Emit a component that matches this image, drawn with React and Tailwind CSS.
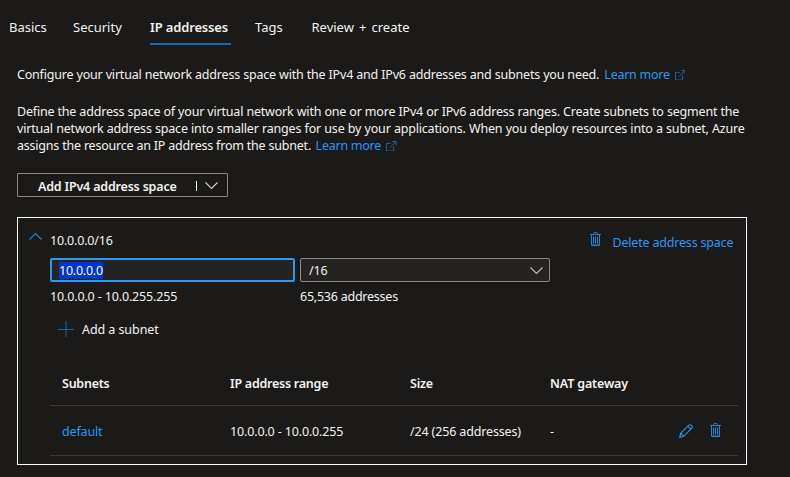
const ExternalIcon = () => (
  <svg className="ml-[5px] inline-block h-[10.500px] w-[10.500px] align-[-1px]" viewBox="0 0 11 11" fill="none" stroke="#2583cf" strokeWidth="0.75">
    <path d="M5 2.500H.5v8h7.500V6M6.500.5h4v4M10.500.5L4 7" />
  </svg>
);

const TrashIcon = () => (
  <svg className="h-[15px] w-[11px] shrink-0" viewBox="0 0 11 15" fill="none" stroke="#2384d5" strokeWidth="1">
    <path d="M0 2.500h11M3.500 2.500v-1q0-.9.9-.9h2.200q.9 0 .9.9v1M1.500 2.500v10.600q0 .5.5.5h7q.5 0 .5-.5V2.500" />
    <path d="M3.500 4.500v7M5.500 4.500v7M7.500 4.500v7M1.500 13h8" strokeWidth="1.1" />
  </svg>
);

const PencilIcon = () => (
  <svg className="h-[14px] w-[14px] shrink-0" viewBox="0 0 14 14" fill="none" stroke="#2b94e8" strokeWidth="1.1">
    <path d="M.7 13.300l.9-4L9.800 1.200q1.200-1 2.400 0l.6.6q1 1.200 0 2.400L4.700 12.300zM1.700 9.300l3 3M8.800 2.200l3 3" />
  </svg>
);

const Chevron = ({ color, up = false }) => (
  <svg className="h-[7px] w-[13px] shrink-0" viewBox="0 0 13 7" fill="none" stroke={color} strokeWidth="1.1">
    <path d={up ? "M.5 6.500L6.500.5l6 6" : "M.5.5l6 6 6-6"} />
  </svg>
);

export default function App() {
  return (
    <div className="h-[477px] w-[790px] overflow-hidden bg-[#1b1a19] font-['Noto_Sans','Open_Sans',sans-serif] text-[12.5px] leading-[17px] tracking-[-0.19px] whitespace-nowrap text-[#f3f2f1]">
      <nav className="flex h-[45px] pt-[19px] pl-[9px] text-[13px] leading-[17px] tracking-normal">
        <span className="w-16">Basics</span>
        <span className="w-[77px]">Security</span>
        <span className="h-[26px] w-[81px] border-b-2 border-[#106ebe] font-semibold tracking-[-0.15px]">IP addresses</span>
        <span className="ml-6 w-[56.500px]">Tags</span>
        <span className="[word-spacing:1.7px]">Review + create</span>
      </nav>
      <main className="pl-[17px]">
        <p className="mt-[21px]">
          <span className="[word-spacing:0.07px]">Configure your virtual network address space with the IPv4 and IPv6 addresses and subnets you need.</span>{" "}
          <a className="ml-[2px] tracking-[-0.25px] text-[#2899f5]">Learn more<ExternalIcon /></a>
        </p>
        <div className="mt-5">
          <div className="[word-spacing:0.1px]">Define the address space of your virtual network with one or more IPv4 or IPv6 address ranges. Create subnets to segment the</div>
          <div className="[word-spacing:0.25px]">virtual network address space into smaller ranges for use by your applications. When you deploy resources into a subnet, Azure</div>
          <div><span className="tracking-[-0.21px]">assigns the resource an IP address from the subnet.</span> <a className="ml-[1.500px] tracking-[-0.25px] text-[#2899f5]">Learn more<ExternalIcon /></a></div>
        </div>
        <button className="mt-[19px] flex h-6 w-[211px] items-center rounded-[1px] border border-[#8a8886] pl-5 font-semibold">
          <span className="w-[158px] pt-[2px] text-left">Add IPv4 address space</span>
          <span className="mr-[8px] h-[10px] w-px translate-y-px bg-white" />
          <Chevron color="#d0cfcd" />
        </button>
        <section className="mt-5 h-[248px] w-[730px] border border-white pl-8">
          <div className="flex h-10">
            <div className="-ml-[21px] w-[21px] pt-[15px]"><Chevron color="#2384d5" up /></div>
            <span className="w-[540px] pt-[14px]">10.0.0.0/16</span>
            <span className="pt-[14px]"><TrashIcon /></span>
            <a className="ml-[11.500px] pt-4 text-[#2899f5]">Delete address space</a>
          </div>
          <div className="flex gap-[5px]">
            <div className="flex h-6 w-[245px] items-center rounded-[2px] border-2 border-[#2899f5] bg-[#252423] pl-[7px]">
              <span className="bg-[#0034cf] tracking-[-0.25px] text-white">10.0.0.0</span>
            </div>
            <div className="flex h-6 w-[250px] items-center justify-between rounded-[2px] border border-[#8a8886] bg-[#252423] pr-[6px] pl-2">
              <span>/16</span>
              <Chevron color="#c0bfbd" />
            </div>
          </div>
          <div className="mt-[6px] flex">
            <span className="w-[250px] tracking-[-0.15px]">10.0.0.0 - 10.0.255.255</span>
            <span className="tracking-[-0.24px]">65,536 addresses</span>
          </div>
          <div className="mt-[15px] flex h-[18px] items-center pl-2">
            <svg className="mr-2 h-4 w-4" viewBox="0 0 16 16" stroke="#176bad"><path d="M0 8.500h16M8 0v16" /></svg>
            <span className="tracking-[-0.07px]">Add a subnet</span>
          </div>
          <div className="mt-[18px] flex h-[50px] w-[688px] items-center border-b border-[#3b3a39] pt-[6px] pl-3 font-semibold tracking-[-0.25px]">
            <span className="w-[168px]">Subnets</span>
            <span className="w-[180px]">IP address range</span>
            <span className="w-[140px]">Size</span>
            <span className="tracking-[-0.15px]">NAT gateway</span>
          </div>
          <div className="flex h-[50px] w-[688px] items-center border-b border-[#3b3a39] pt-[2px] pl-3 tracking-[-0.15px]">
            <a className="w-[168px] text-[#2899f5]">default</a>
            <span className="w-[180px]">10.0.0.0 - 10.0.0.255</span>
            <span className="w-[140px]">/24 (256 addresses)</span>
            <span className="w-[128.500px]">-</span>
            <div className="flex items-center gap-[17px] pb-[2px]">
              <PencilIcon />
              <TrashIcon />
            </div>
          </div>
        </section>
      </main>
    </div>
  );
}
